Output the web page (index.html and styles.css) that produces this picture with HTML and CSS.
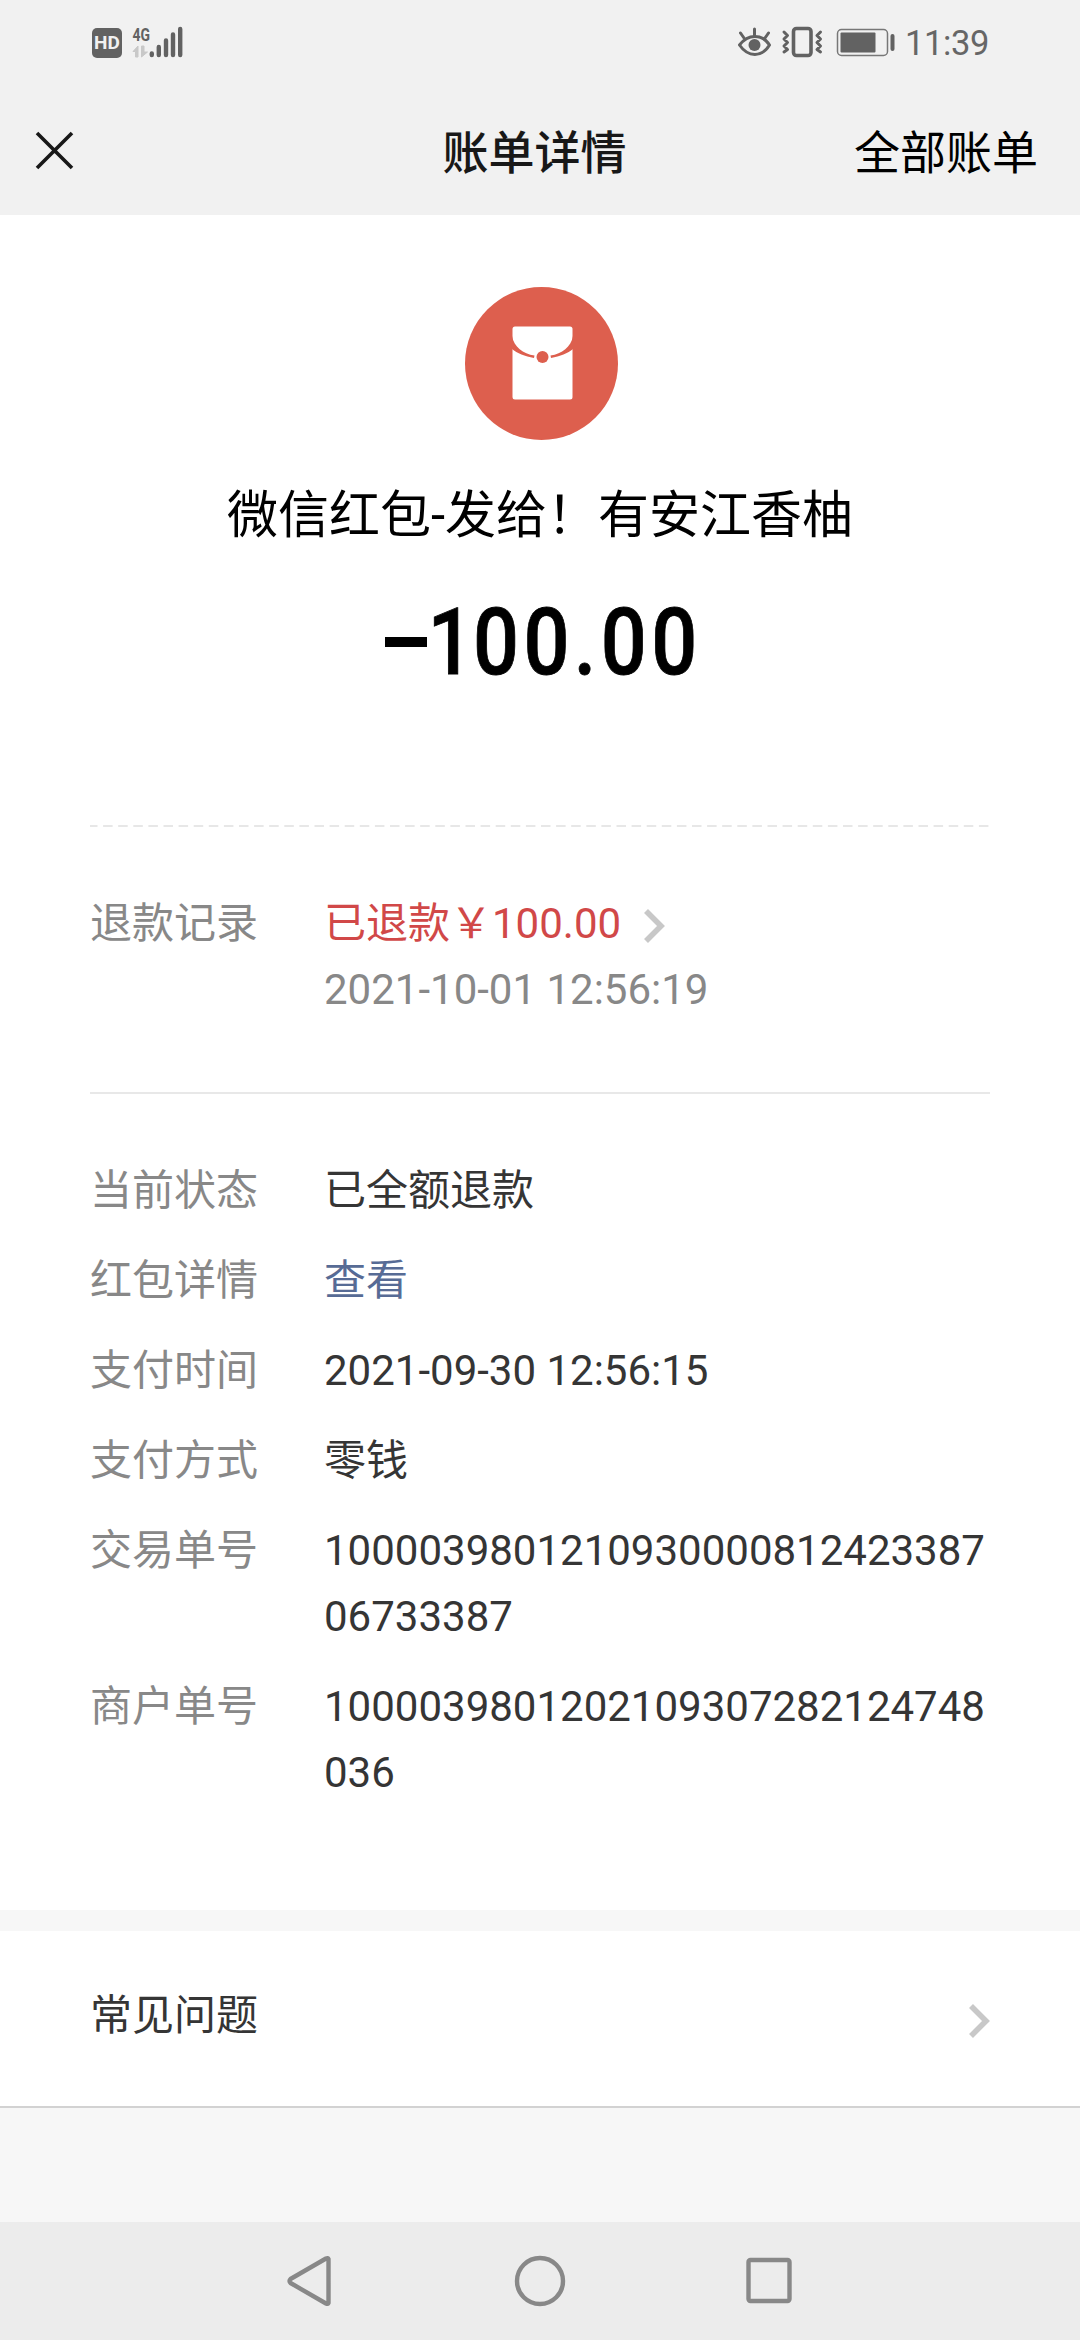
FILE: index.html
```html
<!DOCTYPE html>
<html lang="zh-CN">
<head>
<meta charset="utf-8">
<title>账单详情</title>
<link rel="stylesheet" href="styles.css">
</head>
<body>
<div class="status-bar">
  <div class="status-left">
    <span class="hd-badge">HD</span>
    <svg width="52" height="34" viewBox="40 0 52 34">
      <text class="net-text" x="40.5" y="14.6" textLength="17.5" lengthAdjust="spacingAndGlyphs">4G</text>
      <path d="M41 25.500L46 20V31H43.500V25.500ZM49.500 20H52V26H55.500L49.500 31Z" fill="#c8c8c8" stroke="#c8c8c8"/>
      <path d="M59.800 27.500V29M66.800 21V29M74 14.500V29M81 8.500V29M88.200 3V29" stroke="#626262" stroke-width="4.400" stroke-linecap="round"/>
    </svg>
  </div>
  <div class="status-right">
    <svg width="160" height="34" viewBox="0 0 160 34" fill="none" stroke="#626262" stroke-linecap="round" stroke-linejoin="round">
      <path d="M1.500 19C10 7.500 24 7.500 31.500 19C24 31.500 10 31.500 1.500 19Z" stroke-width="3"/>
      <circle cx="16.500" cy="19" r="6" fill="#626262" stroke="none"/>
      <path d="M16.500 3V9M2.500 7L6 12M30.500 7L27 12" stroke-width="3"/>
      <rect x="55.500" y="2.500" width="17.500" height="27" rx="3" stroke-width="3.600"/>
      <path d="M46 6L49.500 9.500L46 13L49.500 16.500L46 20L49.500 23.500L46 26M82.500 6L79 9.500L82.500 13L79 16.500L82.500 20L79 23.500L82.500 26" stroke-width="3"/>
      <rect x="99.500" y="3.500" width="50" height="26" rx="4" stroke="#777" stroke-width="1.500"/>
      <rect x="102.500" y="6.500" width="35" height="20" rx="1" fill="#626262" stroke="none"/>
      <path d="M154.500 10V23" stroke-width="4"/>
    </svg>
    <span class="clock">11:39</span>
  </div>
</div>
<header class="title-bar">
  <svg class="close" width="50" height="50" viewBox="0 0 50 50"><path d="M7 7L42 42M42 7L7 42" stroke="#181818" stroke-width="3.600"/></svg>
  <h1 class="title">账单详情</h1>
  <a class="all-bills">全部账单</a>
</header>
<main class="bill">
  <section class="summary">
    <svg class="avatar" width="153" height="153" viewBox="0 0 153 153">
      <circle cx="76.500" cy="76.500" r="76.500" fill="#dd5f4e"/>
      <rect x="47.500" y="39.500" width="60" height="73" rx="2.500" fill="#fff"/>
      <path d="M47 49C49 60 58 67 69.500 68.500L69 71C60 69.500 52 66 47 62ZM108 49C106 60 97 67 85.500 68.500L86 71C95 69.500 103 66 108 62Z" fill="#dd5f4e"/>
      <circle cx="77.500" cy="70" r="6" fill="#dd5f4e"/>
    </svg>
    <div class="payee">微信红包-发给！有安江香柚</div>
    <div class="amount"><span class="minus"></span><span class="one">1</span><span class="digits">00.00</span></div>
  </section>
  <svg class="dashes" width="900" height="2" viewBox="0 0 900 2"><path d="M0 1H900" stroke="#e7e7e7" stroke-width="2" stroke-dasharray="9.500 5.600" stroke-dashoffset="2"/></svg>
  <section class="refund row">
    <div class="label">退款记录</div>
    <div class="value">
      <div class="refund-link">已退款￥100.00<svg width="24" height="36" viewBox="0 0 24 36"><path d="M3 3L18 18L3 33" fill="none" stroke="#c8c8c8" stroke-width="5.600"/></svg></div>
      <div class="refund-time">2021-10-01 12:56:19</div>
    </div>
  </section>
  <section class="details">
    <div class="row"><div class="label">当前状态</div><div class="value">已全额退款</div></div>
    <div class="row"><div class="label">红包详情</div><div class="value link">查看</div></div>
    <div class="row"><div class="label">支付时间</div><div class="value">2021-09-30 12:56:15</div></div>
    <div class="row"><div class="label">支付方式</div><div class="value">零钱</div></div>
    <div class="row"><div class="label">交易单号</div><div class="value">100003980121093000081242338706733387</div></div>
    <div class="row"><div class="label">商户单号</div><div class="value">1000039801202109307282124748036</div></div>
  </section>
</main>
<div class="faq">
  <span>常见问题</span>
  <svg width="24" height="36" viewBox="0 0 24 36"><path d="M3 3L18 18L3 33" fill="none" stroke="#c8c8c8" stroke-width="5.600"/></svg>
</div>
<nav class="nav-bar">
  <svg width="54" height="54" viewBox="0 0 54 54"><path d="M44.500 5V49Q44 50.500 42 49.500L6.500 29Q4.500 27 6.500 25L42 4.500Q44 3.500 44.500 5Z"/></svg>
  <svg width="54" height="54" viewBox="0 0 54 54"><circle cx="27" cy="27" r="23"/></svg>
  <svg width="54" height="54" viewBox="0 0 54 54"><rect x="6.500" y="6" width="41" height="41" rx="2"/></svg>
</nav>
</body>
</html>
```
FILE: styles.css
```css
* { box-sizing: border-box; }
body {
  margin: 0;
  width: 1080px;
  height: 2340px;
  display: flex;
  flex-direction: column;
  background: #f7f7f7;
  color: #353535;
  font: 42px/66px Roboto, "Noto Sans CJK SC", sans-serif;
  overflow: hidden;
}
svg { display: block; flex: none; }
.status-bar {
  height: 86px;
  padding: 26px 92px 0 92px;
  display: flex;
  justify-content: space-between;
  align-items: flex-start;
  background: #f1f1f1;
}
.status-left { display: flex; gap: 10px; }
.hd-badge {
  width: 30px;
  height: 30px;
  margin-top: 2px;
  border-radius: 5px;
  background: #626262;
  color: #f1f1f1;
  font-size: 19px;
  font-weight: 700;
  line-height: 30px;
  text-align: center;
}
.net-text { font: 700 19px Roboto, sans-serif; fill: #626262; }
.status-right { display: flex; gap: 7px; }
.clock { width: 83px; font-size: 34.5px; line-height: 34px; letter-spacing: -0.4px; color: #666; }
.title-bar {
  height: 129px;
  padding: 0 42px 0 31px;
  display: grid;
  grid-template-columns: 1fr auto 1fr;
  align-items: start;
  background: #f1f1f1;
  color: #000;
}
.close { margin-top: 40px; margin-left: -1px; }
.title, .all-bills { margin: 34px 0 0; font-size: 46px; line-height: 66px; }
.title { font-weight: 500; color: #181818; }
.all-bills { justify-self: end; }
.bill { height: 1695px; padding: 72px 90px 0; background: #fff; }
.summary { height: 538px; display: flex; flex-direction: column; align-items: center; color: #000; }
.avatar { margin-left: 3px; }
.payee { margin-top: 42px; font-size: 51px; line-height: 68px; }
.amount {
  width: 310px;
  margin-top: 43px;
  display: flex;
  font-size: 92px;
  font-weight: 500;
  line-height: 100px;
  -webkit-text-stroke: 0.8px #000;
}
.minus { width: 42px; height: 10px; margin-top: 44px; background: #000; flex: none; }
.one { width: 50px; margin-left: -4px; flex: none; transform: scaleX(0.88); transform-origin: 38px 50%; }
.digits { letter-spacing: 5px; transform: scaleX(0.88); transform-origin: left; }
.row { display: flex; }
.label { width: 234px; flex: none; color: #888; }
.value { flex: 1; word-break: break-all; }
.refund { height: 267px; padding-top: 64px; border-bottom: 2px solid #e8e8e8; }
.refund-link { display: flex; align-items: center; gap: 22px; color: #d14848; }
.refund-link svg { margin-top: 4px; }
.refund-time { color: #888; }
.details { display: flex; flex-direction: column; gap: 24px; padding-top: 64px; }
.link { color: #576b95; }
.faq {
  height: 177px;
  margin-top: 21px;
  padding: 52px 88px 0 90px;
  display: flex;
  justify-content: space-between;
  align-items: flex-start;
  background: #fff;
  border-bottom: 2px solid #d2d2d2;
}
.faq svg { margin-top: 20px; }
.nav-bar {
  height: 118px;
  margin-top: auto;
  padding: 32px 284px 0;
  display: flex;
  justify-content: space-between;
  background: #ececec;
}
.nav-bar svg { fill: none; stroke: #888; stroke-width: 4.4px; stroke-linejoin: round; }
```
